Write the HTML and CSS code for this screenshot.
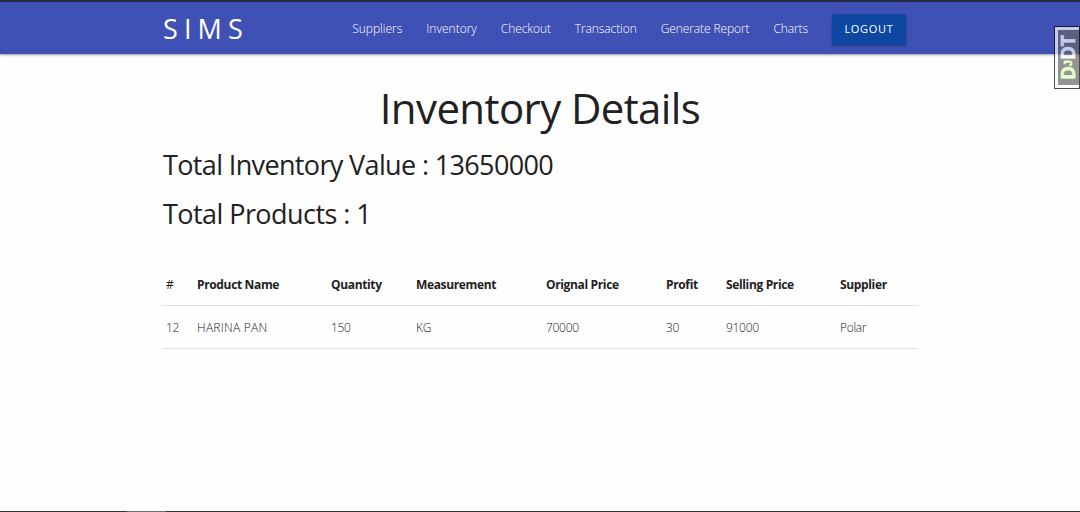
FILE: index.html
```html
<!DOCTYPE html>
<html lang="en">
<head>
<meta charset="utf-8">
<title>Inventory Details</title>
<link rel="stylesheet" href="styles.css">
</head>
<body>
<nav class="navbar">
  <div class="container nav-wrapper">
    <a class="brand">SIMS</a>
    <div class="nav-links">
      <a class="short">Suppliers</a>
      <a class="short">Inventory</a>
      <a>Checkout</a>
      <a>Transaction</a>
      <a>Generate Report</a>
      <a>Charts</a>
      <a class="btn">LOGOUT</a>
    </div>
  </div>
</nav>
<main class="container">
  <h1 class="title">Inventory Details</h1>
  <h2 class="stat value">Total Inventory Value : 13650000</h2>
  <h2 class="stat">Total Products : 1</h2>
  <table class="items">
    <colgroup><col class="c-id"><col class="c-name"><col class="c-qty"><col class="c-unit"><col class="c-cost"><col class="c-profit"><col class="c-price"><col class="c-supplier"></colgroup>
    <thead>
      <tr><th class="hash">#</th><th>Product Name</th><th>Quantity</th><th>Measurement</th><th>Orignal Price</th><th>Profit</th><th>Selling Price</th><th>Supplier</th></tr>
    </thead>
    <tbody>
      <tr><td>12</td><td class="name">HARINA PAN</td><td>150</td><td>KG</td><td>70000</td><td>30</td><td>91000</td><td>Polar</td></tr>
    </tbody>
  </table>
</main>
<div class="debug-handle"><div class="debug-label"><span class="dj">D<small>J</small></span><span class="dt">DT</span></div></div>
<div class="bottom-edge"></div>
</body>
</html>
```
FILE: styles.css
```css
* { box-sizing: border-box; }
body {
  margin: 0;
  height: 512px;
  overflow: hidden;
  display: flex;
  flex-direction: column;
  background: #fefefe;
  color: #212121;
  font-family: "Open Sans", "Noto Sans", sans-serif;
}
.container { width: 756px; margin: 0 auto; }
.navbar {
  height: 54px;
  flex: none;
  border-top: 2px solid #242c42;
  background: #3f51b5;
  box-shadow: 0 1px 2px rgba(0,0,0,.3), 0 1px 3px rgba(0,0,0,.12);
  color: #fff;
}
.nav-wrapper {
  height: 51px;
  display: flex;
  justify-content: space-between;
  align-items: center;
}
.brand { font-size: 27px; font-weight: 400; line-height: 51px; letter-spacing: 6.1px; padding: 2px 0 0 1px; }
.nav-links { display: flex; align-items: center; gap: 24px; padding: 1px 12px 0 0; font-size: 12px; font-weight: 300; letter-spacing: -.1px; }
.nav-links .short { letter-spacing: 0; }
.btn {
  width: 74px;
  height: 31px;
  line-height: 30px;
  margin-top: 3px;
  border-radius: 2px;
  background: #0d47a1;
  box-shadow: 0 1px 3px rgba(0,0,0,.35);
  text-align: center;
  font-size: 11px;
  font-weight: 400;
  letter-spacing: .7px;
}
.title { margin: 31px 0 0; height: 46px; line-height: 46px; text-align: center; font-size: 42px; font-weight: 400; letter-spacing: -.6px; }
.stat { margin: 13px 0 0; padding-left: 1px; height: 36px; line-height: 40px; font-size: 27px; font-weight: 400; letter-spacing: -.56px; white-space: nowrap; }
.value { margin-top: 14px; letter-spacing: -.64px; }
.items { width: 756px; margin-top: 32px; table-layout: fixed; border-collapse: collapse; font-size: 12px; letter-spacing: -.3px; }
.items tr { height: 43px; border-bottom: 1px solid #e0e0e0; }
.items th, .items td { padding: 1px 0 0 4px; text-align: left; white-space: nowrap; }
.items th { padding-top: 3px; font-weight: 700; letter-spacing: -.35px; }
.items .hash { font-weight: 400; }
.items td { font-weight: 300; }
.items .name { letter-spacing: .25px; }
.c-id { width: 31px; }
.c-name { width: 134px; }
.c-qty { width: 85px; }
.c-unit { width: 130px; }
.c-cost { width: 120px; }
.c-profit { width: 60px; }
.c-price { width: 114px; }
.c-supplier { width: 82px; }
.debug-handle {
  position: absolute;
  top: 26px;
  right: 0;
  width: 26px;
  height: 63px;
  padding: 3px 0 3px 3px;
  border: 1px solid #000;
  background: #fff;
  opacity: .7;
}
.debug-label {
  width: 21px;
  height: 55px;
  display: flex;
  align-items: center;
  justify-content: center;
  background: #666;
  writing-mode: vertical-rl;
  transform: rotate(180deg);
  font-size: 19px;
  line-height: 19px;
  font-weight: 700;
  letter-spacing: -.3px;
  -webkit-text-stroke: .6px;
}
.dj { color: #dcffb4; }
.dj small { font: 700 11px/19px "Liberation Sans", sans-serif; }
.dt { color: #fff; }
.bottom-edge { position: absolute; left: 0; right: 0; bottom: 0; height: 1px; background: linear-gradient(90deg, #30363c 127px, #706d74 127px 166px, #30363c 166px); }
```
